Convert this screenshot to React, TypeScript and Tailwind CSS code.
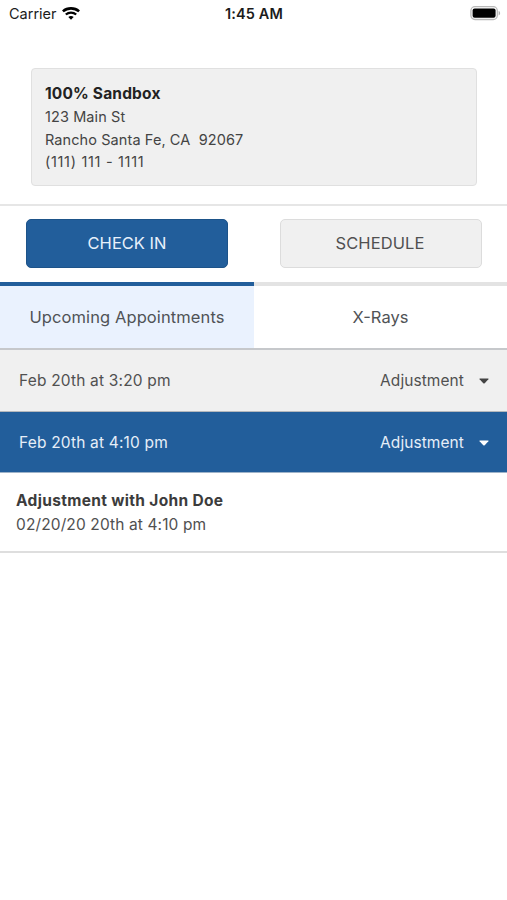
import clsx from 'clsx';

interface Appointment {
  label: string;
  type: string;
  open: boolean;
}

const appointments: Appointment[] = [
  { label: 'Feb 20th at 3:20 pm', type: 'Adjustment', open: false },
  { label: 'Feb 20th at 4:10 pm', type: 'Adjustment', open: true },
];

function WifiIcon() {
  return (
    <svg className="h-[13px] w-[18px]" viewBox="0 0 18 13" fill="none">
      <path d="M.9 4.4C5.4.4 12.6.4 17.1 4.4" stroke="#000" strokeWidth="2.6" />
      <path d="M3.8 7.5C6.8 4.9 11.2 4.9 14.2 7.5" stroke="#000" strokeWidth="2.3" />
      <path d="M6.3 10.1C8 8.7 10 8.7 11.7 10.1L9 12.8Z" fill="#000" />
    </svg>
  );
}

function BatteryIcon() {
  return (
    <svg className="h-[15px] w-[31px]" viewBox="0 0 31 15">
      <rect x="0.9" y="0.7" width="26.4" height="12.8" rx="4" fill="#fff" stroke="#b9b9b9" strokeWidth="1.3" />
      <rect x="2.6" y="2.4" width="23" height="9.4" rx="2" fill="#000" />
      <path d="M28.6 5C30.6 5.6 30.6 8.8 28.6 9.4Z" fill="#b0b0b0" />
    </svg>
  );
}

function StatusBar() {
  return (
    <div className="grid h-7 grid-cols-3 items-center pr-[6px] pl-[9px] text-[#1c1c1c]">
      <div className="flex items-center gap-[5px] pb-px">
        <span className="text-[14.5px]">Carrier</span>
        <WifiIcon />
      </div>
      <span className="pr-[2px] text-center text-[14.5px] font-semibold tracking-[0.12px]">1:45 AM</span>
      <div className="flex justify-end pb-px">
        <BatteryIcon />
      </div>
    </div>
  );
}

function AppointmentRow({ appointment }: { appointment: Appointment }) {
  return (
    <button
      className={clsx(
        'flex w-full items-center justify-between pr-[18px] pl-[19px] text-[15.5px] tracking-[0.07px]',
        appointment.open
          ? 'h-[61px] border-b border-[#9eb3c9] bg-[#225e9b] pt-px text-[#e6eef8]'
          : 'h-[62px] border-b border-[#b5b8bc] bg-[#f0f0f0] text-[#505050]',
      )}
    >
      <span className="tracking-[0.18px]">{appointment.label}</span>
      <span className="flex items-center gap-[15px]">
        {appointment.type}
        <svg
          className={clsx('h-[6px] w-[10px]', appointment.open ? 'fill-white' : 'fill-[#444]')}
          viewBox="0 0 10 6"
        >
          <path d="M1 .5h8q1 0 .4.8L5.7 5.2q-.7.6-1.4 0L.6 1.3Q0 .5 1 .5z" />
        </svg>
      </span>
    </button>
  );
}

export default function App() {
  return (
    <div className="min-h-screen w-full bg-white font-['Inter',sans-serif]">
      <StatusBar />

      {/* Office address */}
      <section className="border-b-2 border-[#e6e6e6] pt-10 pr-[30px] pb-[18px] pl-[31px]">
        <address className="h-[118px] rounded-[4px] border border-[#e0e0e0] bg-[#f0f0f0] px-[13px] pt-[13px] text-[14.5px] leading-[22.4px] tracking-[0.09px] text-[#444] not-italic">
          <p className="mb-[1.3px] text-[15.5px] leading-[23px] font-bold tracking-[0.17px] text-[#222]">100% Sandbox</p>
          <p>123 Main St</p>
          <p className="whitespace-pre">{'Rancho Santa Fe, CA  92067'}</p>
          <p className="tracking-[0.68px]">(111) 111 - 1111</p>
        </address>
      </section>

      {/* Actions */}
      <div className="flex h-[76px] justify-between pt-[13px] pr-[25px] pl-[26px]">
        <button className="h-[49px] w-[202px] rounded-[5px] border border-[#1d5389] bg-[#225e9b] text-[16.5px] text-[#e8f1fb]">
          CHECK IN
        </button>
        <button className="h-[49px] w-[202px] rounded-[5px] border border-[#dcdcdc] bg-[#f0f0f0] pr-[2px] text-[16.5px] tracking-[0.1px] text-[#505050]">
          SCHEDULE
        </button>
      </div>

      {/* Tabs */}
      <div className="flex h-[68px] border-b-2 border-[#c6c8cb] text-[16.5px] text-[#505356]">
        <button className="w-[254px] border-t-4 border-[#225e9b] bg-[#eaf2fe] tracking-[0.1px]">
          Upcoming Appointments
        </button>
        <button className="flex-1 border-t-4 border-[#e3e3e3]">X-Rays</button>
      </div>

      {appointments.map((appointment) => (
        <AppointmentRow key={appointment.label} appointment={appointment} />
      ))}

      {/* Details of the open appointment */}
      <div className="h-[80px] border-b-2 border-[#dedede] px-4 pt-[16px] text-[15.5px] leading-6 text-[#505050]">
        <p className="font-bold tracking-[0.33px] text-[#3c3c3c]">Adjustment with John Doe</p>
        <p className="tracking-[0.12px]">02/20/20 20th at 4:10 pm</p>
      </div>
    </div>
  );
}
